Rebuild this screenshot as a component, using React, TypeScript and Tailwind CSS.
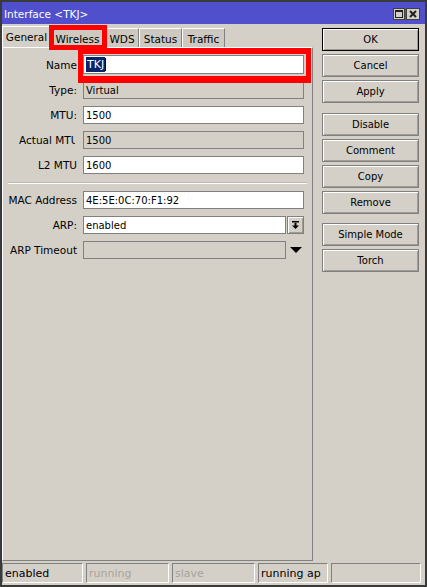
import type { ReactNode } from 'react'

// classic 3D edges
const raisedEdge = 'shadow-[inset_1px_1px_0_#ffffff,inset_-1px_-1px_0_#a09c94]'

function WinButton({ children, isDefault }: { children: ReactNode; isDefault?: boolean }) {
  return (
    <div
      className={`h-[23px] flex items-center justify-center pt-[1px] border ${isDefault ? 'border-black' : 'border-[#808080]'} ${raisedEdge}`}
    >
      {children}
    </div>
  )
}

function Field({ value, readOnly, width = 'w-[221px]' }: { value?: string; readOnly?: boolean; width?: string }) {
  return (
    <div
      className={`${width} h-[18px] flex items-center pl-[2px] pt-[1px] border border-[#808080] ${readOnly ? 'bg-[#d4d0c8]' : 'bg-white'} whitespace-nowrap overflow-hidden`}
    >
      {value}
    </div>
  )
}

function Row({ label, children }: { label: ReactNode; children: ReactNode }) {
  return (
    <div className="flex items-center h-[18px]">
      <div className="w-[74px] flex justify-end whitespace-nowrap text-[10.5px] pt-[1px]">{label}</div>
      <div className="ml-[6px] flex items-center">{children}</div>
    </div>
  )
}

const tabs = [
  { name: 'General', w: 'w-[48px]', active: true },
  { name: 'Wireless', w: 'w-[55px]' },
  { name: 'WDS', w: 'w-[34px]' },
  { name: 'Status', w: 'w-[43px]' },
  { name: 'Traffic', w: 'w-[43px]' },
]

const statusCells = [
  { text: 'enabled', w: 'w-[81px]', dim: false },
  { text: 'running', w: 'w-[83px]', dim: true },
  { text: 'slave', w: 'w-[83px]', dim: true },
  { text: 'running ap', w: 'w-[70px]', dim: false },
  { text: '', w: 'w-[90px]', dim: false },
]

export default function App() {
  return (
    <div className="relative w-[427px] h-[587px] border-2 border-[#3a3a3a] bg-[#d4d0c8] flex flex-col font-['DejaVu_Sans',sans-serif] text-[10px] text-black leading-none select-none">
      {/* Title bar */}
      <div className="h-[22px] bg-[#5050cc] flex items-center pl-[2px] pr-[5px]">
        <span className="text-white text-[10.5px] pt-[2px]">Interface &lt;TKJ&gt;</span>
        <div className="ml-auto flex gap-[1px] pt-[1px]">
          <div className="w-[12px] h-[12px] bg-[#d4d0c8] border border-[#404040] flex items-center justify-center">
            <div className="w-[8px] h-[8px] border border-[#202020] border-t-2" />
          </div>
          <div className="w-[14px] h-[12px] bg-[#d4d0c8] border border-[#404040] flex items-center justify-center">
            <svg width="8" height="8" viewBox="0 0 8 8">
              <path d="M1 1 L7 7 M7 1 L1 7" stroke="#202020" strokeWidth="2" />
            </svg>
          </div>
        </div>
      </div>

      {/* Body */}
      <div className="flex flex-1">
        <div className="w-[311px] flex flex-col">
          {/* Tabs */}
          <div className="h-[23px] flex items-end">
            {tabs.map((t) => (
              <div
                key={t.name}
                className={`${t.w} flex items-center justify-center border-l border-t border-l-white border-t-white text-[10.5px] ${
                  t.active ? 'h-[21px]' : 'h-[19px] bg-[#cdc9c1] border-r border-r-[#808080] pt-[2px]'
                }`}
              >
                {t.name}
              </div>
            ))}
          </div>

          {/* Panel */}
          <div className="flex-1 border border-t-white border-l-white border-r-[#808080] border-b-[#808080] pt-[7px] flex flex-col">
            <div className="flex flex-col gap-[7px]">
              <div className="flex items-center h-[19px]">
                <div className="w-[74px] text-right text-[10.5px] pt-[1px]">Name</div>
                <div className="ml-[6px] w-[221px] h-[19px] bg-white border border-[#808080] flex items-center pl-[2px]">
                  <span className="bg-[#0a246a] text-white text-[11px] px-[1px] py-[2px]">TKJ</span>
                  <span className="w-[1px] h-[13px] bg-black" />
                </div>
              </div>
              <Row label="Type:">
                <Field value="Virtual" readOnly />
              </Row>
              <Row label="MTU:">
                <Field value="1500" />
              </Row>
              <Row
                label={
                  <span className="w-[56px] mr-[2px] overflow-hidden whitespace-nowrap">Actual MTU:</span>
                }
              >
                <Field value="1500" readOnly />
              </Row>
              <Row label="L2 MTU">
                <Field value="1600" />
              </Row>
            </div>

            <div className="mt-[8px] mx-[5px] h-[2px] border-t border-t-[#bdb9b1] border-b border-b-white" />

            <div className="mt-[7px] flex flex-col gap-[7px]">
              <Row label="MAC Address">
                <Field value="4E:5E:0C:70:F1:92" />
              </Row>
              <Row label="ARP:">
                <Field value="enabled" width="w-[203px]" />
                <div className={`ml-[1px] w-[17px] h-[18px] border border-[#808080] flex items-center justify-center ${raisedEdge}`}>
                  <svg width="9" height="10" viewBox="0 0 9 10">
                    <rect x="1" y="1" width="7" height="1.5" fill="#000" />
                    <rect x="3.5" y="3" width="2" height="3" fill="#000" />
                    <path d="M1 5.5 H8 L4.5 9 Z" fill="#000" />
                  </svg>
                </div>
              </Row>
              <Row label="ARP Timeout">
                <Field readOnly width="w-[203px]" />
                <svg className="ml-[4px]" width="12" height="7" viewBox="0 0 12 7">
                  <path d="M0 0 H12 L6 6 Z" fill="#000" />
                </svg>
              </Row>
            </div>
          </div>
        </div>

        {/* Buttons */}
        <div className="ml-[9px] pt-[4px] w-[97px] flex flex-col">
          <div className="flex flex-col gap-[3px]">
            <WinButton isDefault>OK</WinButton>
            <WinButton>Cancel</WinButton>
            <WinButton>Apply</WinButton>
          </div>
          <div className="mt-[10px] flex flex-col gap-[3px]">
            <WinButton>Disable</WinButton>
            <WinButton>Comment</WinButton>
            <WinButton>Copy</WinButton>
            <WinButton>Remove</WinButton>
          </div>
          <div className="mt-[9px] flex flex-col gap-[3px]">
            <WinButton>Simple Mode</WinButton>
            <WinButton>Torch</WinButton>
          </div>
        </div>
      </div>

      {/* Status bar */}
      <div className="h-[20px] mt-[2px] mb-[2px] flex gap-[3px]">
        {statusCells.map((c, i) => (
          <div
            key={i}
            className={`${c.w} h-full flex items-center pl-[2px] border border-t-[#808080] border-l-[#808080] border-r-white border-b-white ${
              c.dim ? 'text-[#a8a49c]' : 'text-black'
            } text-[11px]`}
          >
            {c.text}
          </div>
        ))}
      </div>

      {/* red annotation frames */}
      <div className="absolute left-[47px] top-[23px] w-[58px] h-[25px] border-[5px] border-[#ff0000]" />
      <div className="absolute left-[76px] top-[46px] w-[233px] h-[35px] border-[5px] border-t-[6px] border-b-[7px] border-[#ff0000]" />
    </div>
  )
}
